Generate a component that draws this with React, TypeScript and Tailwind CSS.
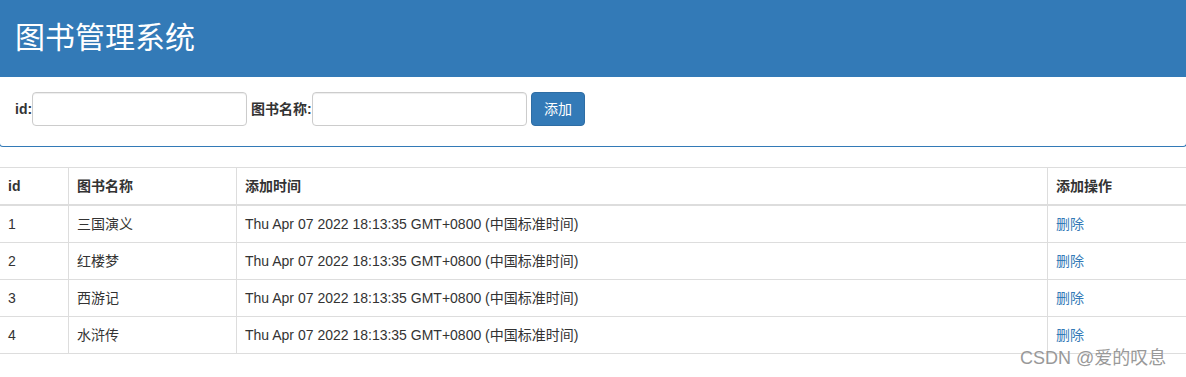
import React from "react";

type Book = {
  id: number;
  name: string;
  time: string;
};

const BOOKS: Book[] = [
  { id: 1, name: "三国演义", time: "Thu Apr 07 2022 18:13:35 GMT+0800 (中国标准时间)" },
  { id: 2, name: "红楼梦", time: "Thu Apr 07 2022 18:13:35 GMT+0800 (中国标准时间)" },
  { id: 3, name: "西游记", time: "Thu Apr 07 2022 18:13:35 GMT+0800 (中国标准时间)" },
  { id: 4, name: "水浒传", time: "Thu Apr 07 2022 18:13:35 GMT+0800 (中国标准时间)" },
];

const FONT = "font-['Liberation_Sans','Noto_Sans_CJK_SC',sans-serif]";

export default function App() {
  return (
    <div className={`relative h-[377px] w-full overflow-hidden bg-white text-[14px] leading-[20px] text-[#333] ${FONT}`}>
      {/* panel */}
      <div className="-mx-px mb-5 rounded-b-[4px] border border-t-0 border-[#337ab7]">
        <div className="flex h-[77px] items-center bg-[#337ab7] px-[15px] pb-[2px]">
          <h2 className="text-[30px] leading-[33px] font-normal text-white">图书管理系统</h2>
        </div>
        <div className="flex items-center pl-[15px] pt-[15px] pb-[20px]">
          <label className="w-[17px] whitespace-nowrap font-bold">id:</label>
          <input
            type="text"
            className="h-[34px] w-[215px] rounded-[4px] border border-[#ccc] px-3 shadow-[inset_0_1px_1px_rgba(0,0,0,0.075)] outline-none"
          />
          <label className="ml-[4px] w-[61px] whitespace-nowrap font-bold">图书名称:</label>
          <input
            type="text"
            className="h-[34px] w-[215px] rounded-[4px] border border-[#ccc] px-3 shadow-[inset_0_1px_1px_rgba(0,0,0,0.075)] outline-none"
          />
          <button
            type="button"
            className="ml-[4px] h-[34px] w-[54px] rounded-[4px] border border-[#2e6da4] bg-[#337ab7] text-[14px] text-white"
          >
            添加
          </button>
        </div>
      </div>

      {/* table */}
      <table className="-ml-px w-[1189px] table-fixed border-collapse">
        <colgroup>
          <col className="w-[69px]" />
          <col className="w-[168px]" />
          <col className="w-[811px]" />
          <col />
        </colgroup>
        <thead>
          <tr>
            <th className="border border-b-2 border-[#ddd] px-2 py-2 text-left font-bold">id</th>
            <th className="border border-b-2 border-[#ddd] px-2 py-2 text-left font-bold">图书名称</th>
            <th className="border border-b-2 border-[#ddd] px-2 py-2 text-left font-bold">添加时间</th>
            <th className="border border-b-2 border-[#ddd] px-2 py-2 text-left font-bold">添加操作</th>
          </tr>
        </thead>
        <tbody>
          {BOOKS.map((b) => (
            <tr key={b.id}>
              <td className="border border-[#ddd] px-2 py-2">{b.id}</td>
              <td className="border border-[#ddd] px-2 py-2">{b.name}</td>
              <td className="border border-[#ddd] px-2 py-2">{b.time}</td>
              <td className="border border-[#ddd] px-2 py-2">
                <a href="#" className="text-[#337ab7]">删除</a>
              </td>
            </tr>
          ))}
        </tbody>
      </table>

      <div className="pointer-events-none absolute top-[346px] left-[1020px] text-[18px] leading-[24px] text-[#999] [text-shadow:0_0_1px_#fff]">
        CSDN @爱的叹息
      </div>
    </div>
  );
}
